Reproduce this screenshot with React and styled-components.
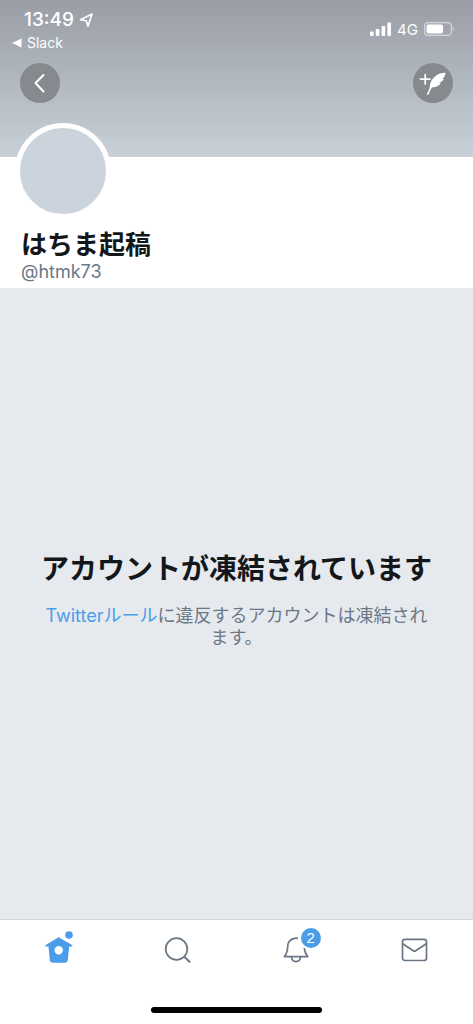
import React, { useState } from "react";
import styled, { createGlobalStyle } from "styled-components";

const GlobalStyle = createGlobalStyle`
  *,
  *::before,
  *::after {
    box-sizing: border-box;
  }

  body {
    margin: 0;
    background: #fff;
    color: #14171a;
    font-family: Inter, "Noto Sans CJK JP", sans-serif;
  }

  h1,
  h2,
  p {
    margin: 0;
  }
`;

const Page = styled.div`
  display: flex;
  flex-direction: column;
  min-height: 100vh;
`;

const Cover = styled.header`
  height: 157px;
  background: linear-gradient(#999da5, #b1b7bf 50%, #c8d1d8);
  color: #fff;
`;

const StatusBar = styled.div`
  display: flex;
  justify-content: space-between;
  height: 60px;
  padding: 8px 18px 0 12px;
`;

const StatusLeft = styled.div`
  display: flex;
  flex-direction: column;
`;

const Clock = styled.div`
  display: flex;
  align-items: center;
  gap: 4px;
  padding-left: 12px;
  font-size: 19px;
  font-weight: 500;
  line-height: 24px;
`;

const BackToApp = styled.a`
  display: flex;
  align-items: center;
  gap: 5px;
  color: inherit;
  font-size: 14px;
  line-height: 22px;
  text-decoration: none;
`;

const StatusRight = styled.div`
  display: flex;
  align-items: center;
  gap: 6px;
  height: 42px;
  font-size: 15px;
`;

const Actions = styled.div`
  display: flex;
  justify-content: space-between;
  padding: 3px 20px 0;
`;

const RoundButton = styled.button`
  display: flex;
  align-items: center;
  justify-content: center;
  width: 40px;
  height: 40px;
  padding: 0;
  border: 0;
  border-radius: 50%;
  background: #868a8e;
  color: #fff;
  cursor: pointer;
`;

const Profile = styled.section`
  height: 131px;
  padding: 0 21px;
  background: #fff;
`;

const Avatar = styled.div`
  width: 96px;
  height: 96px;
  margin: -34px 0 0 -6px;
  border: 5px solid #fff;
  border-radius: 50%;
  background: #cbd4dc;
`;

const Name = styled.h1`
  margin-top: 10px;
  font-size: 26px;
  font-weight: 700;
  line-height: 32px;
`;

const Handle = styled.p`
  color: #6b7785;
  font-size: 18px;
  line-height: 22px;
`;

const Suspended = styled.main`
  display: flex;
  flex: 1;
  flex-direction: column;
  align-items: center;
  justify-content: center;
  gap: 16px;
  padding: 0 40px 10px;
  background: #e6eaef;
  text-align: center;
`;

const Title = styled.h2`
  font-size: 28px;
  font-weight: 700;
  line-height: 40px;
`;

const Message = styled.p`
  color: #6b7785;
  font-size: 18px;
  line-height: 22px;
`;

const RuleLink = styled.a`
  color: #4a9de8;
  text-decoration: none;
`;

const TabBar = styled.nav`
  display: grid;
  grid-template-columns: repeat(4, 1fr);
  height: 84px;
  padding-top: 10px;
  border-top: 1px solid #d3d8dd;
  background: #fff;
`;

const Tab = styled.button`
  position: relative;
  display: flex;
  justify-content: center;
  height: 44px;
  padding: 0;
  border: 0;
  background: none;
  color: ${props => (props.$active ? "#4a9de8" : "#6b7785")};
  cursor: pointer;
`;

const Badge = styled.span`
  position: absolute;
  top: -4px;
  left: calc(50% + 3px);
  width: 24px;
  height: 24px;
  border: 2px solid #fff;
  border-radius: 50%;
  background: #4a9de8;
  color: #fff;
  font-size: 15px;
  line-height: 20px;
  text-align: center;
`;

const HomeArea = styled.footer`
  display: flex;
  justify-content: center;
  height: 21px;
  padding-top: 4px;
  background: #fff;
`;

const HomeIndicator = styled.div`
  width: 36%;
  height: 6px;
  border-radius: 3px;
  background: #000;
`;

const LocationIcon = () => (
  <svg width="16" height="16" viewBox="0 0 16 16" fill="none" aria-hidden="true">
    <path
      d="M14 2 2.500 7.800l5.800 1L10 14.200z"
      stroke="currentColor"
      strokeWidth="1.600"
      strokeLinejoin="round"
    />
  </svg>
);

const TriangleIcon = () => (
  <svg width="10" height="10" viewBox="0 0 10 10" aria-hidden="true">
    <path d="M0 5 9.500.5v9z" fill="currentColor" />
  </svg>
);

const SignalIcon = () => (
  <svg width="21" height="14" viewBox="0 0 21 14" fill="currentColor" aria-hidden="true">
    <rect x="0" y="9.500" width="3.600" height="4.500" rx="1" />
    <rect x="5.800" y="7" width="3.600" height="7" rx="1" />
    <rect x="11.600" y="4" width="3.600" height="10" rx="1" />
    <rect x="17.400" y="0.500" width="3.600" height="13.500" rx="1" />
  </svg>
);

const BatteryIcon = () => (
  <svg width="31" height="14" viewBox="0 0 31 14" aria-hidden="true">
    <rect
      x="0.600"
      y="0.600"
      width="26.800"
      height="12.800"
      rx="3.500"
      fill="none"
      stroke="#fff"
      strokeOpacity="0.550"
      strokeWidth="1.200"
    />
    <rect x="2.500" y="2.500" width="16.500" height="9" rx="1.800" fill="#fff" />
    <path d="M29 4.800c1.300.6 1.300 3.800 0 4.400z" fill="#fff" fillOpacity="0.600" />
  </svg>
);

const ChevronIcon = () => (
  <svg width="40" height="40" viewBox="0 0 40 40" fill="none" aria-hidden="true">
    <path
      d="M23.500 12 15.500 20l8 8.500"
      stroke="currentColor"
      strokeWidth="2"
      strokeLinecap="round"
      strokeLinejoin="round"
    />
  </svg>
);

const ComposeIcon = () => (
  <svg width="40" height="40" viewBox="0 0 40 40" fill="none" aria-hidden="true">
    <path d="M12.200 11.500v9.400M7.500 16.200h9.400" stroke="currentColor" strokeWidth="1.700" strokeLinecap="round" />
    <path
      d="M32.500 9.800C28.500 9.600 24.500 11 21.500 14c-3 2.800-4.300 5.500-4.700 9.300-.3 2.900-1.400 5.200-2.900 7.500-.5.900.9 1.500 1.500.6 1.100-1.900 1.700-3.900 2.700-5.700.6-1 1.400-1.300 2.600-1.400 3.500-.3 6-2 7.300-4.800-.8.300-1.700.4-2.600.3 2.600-.6 4.600-1.900 5.600-4-.6.200-1.100.2-1.700.1 2-1.500 3.100-3.500 3.200-6.100z"
      fill="currentColor"
    />
  </svg>
);

const HomeIcon = () => (
  <svg width="40" height="40" viewBox="0 0 40 40" aria-hidden="true">
    <path
      fill="currentColor"
      fillRule="evenodd"
      d="M20.200 7.500c-.3-.2-.7-.2-1 0L6.700 14.900c-.9.600-.4 1.800.6 1.700l2.200-.2 1.300 13.700c.2 1.800 1.300 2.700 2.900 2.700h12.200c1.600 0 2.700-.9 2.900-2.700l1.400-13.700 2.200.2c1 .1 1.400-1.100.6-1.700zM19.700 16a4.200 4.200 0 1 0 0 8.400 4.200 4.200 0 0 0 0-8.400z"
    />
    <circle cx="30" cy="5" r="3.800" fill="currentColor" />
  </svg>
);

const SearchIcon = () => (
  <svg width="40" height="40" viewBox="0 0 40 40" fill="none" stroke="currentColor" strokeWidth="1.700" aria-hidden="true">
    <circle cx="19.500" cy="19" r="10.800" />
    <path d="m27.500 27 5 4.700" strokeWidth="2" strokeLinecap="round" />
  </svg>
);

const BellIcon = () => (
  <svg width="40" height="40" viewBox="0 0 40 40" fill="none" stroke="currentColor" strokeWidth="1.700" strokeLinejoin="round" aria-hidden="true">
    <path d="M22 8.400c-1-.3-2.400-.3-3.600-.1-4.200.8-6.600 4-6.700 8.200-.1 5.100-1 7.300-3.300 10.100h23.300c-2.200-2.700-3.200-5-3.300-9.100" />
    <path d="M15.500 26.800c.2 3.100 2 4.900 4.500 4.900s4.300-1.800 4.500-4.900" />
  </svg>
);

const MailIcon = () => (
  <svg width="40" height="40" viewBox="0 0 40 40" fill="none" stroke="currentColor" strokeWidth="1.700" strokeLinejoin="round" aria-hidden="true">
    <rect x="8.500" y="9.300" width="24" height="21.200" rx="2.500" />
    <path d="m8.700 13.700 10.700 7c.7.500 1.500.5 2.200 0l10.700-7" />
  </svg>
);

const tabs = [
  { id: "home", label: "ホーム", Icon: HomeIcon },
  { id: "search", label: "検索", Icon: SearchIcon },
  { id: "notifications", label: "通知", Icon: BellIcon, count: 2 },
  { id: "messages", label: "メッセージ", Icon: MailIcon },
];

const App = () => {
  const [activeTab, setActiveTab] = useState("home");

  return (
    <>
      <GlobalStyle />
      <Page>
        <Cover>
          <StatusBar>
            <StatusLeft>
              <Clock>
                13:49
                <LocationIcon />
              </Clock>
              <BackToApp href="#slack">
                <TriangleIcon />
                Slack
              </BackToApp>
            </StatusLeft>
            <StatusRight>
              <SignalIcon />
              4G
              <BatteryIcon />
            </StatusRight>
          </StatusBar>
          <Actions>
            <RoundButton type="button" aria-label="戻る">
              <ChevronIcon />
            </RoundButton>
            <RoundButton type="button" aria-label="ツイートする">
              <ComposeIcon />
            </RoundButton>
          </Actions>
        </Cover>

        <Profile>
          <Avatar />
          <Name>はちま起稿</Name>
          <Handle>@htmk73</Handle>
        </Profile>

        <Suspended>
          <Title>アカウントが凍結されています</Title>
          <Message>
            <RuleLink href="#rules">Twitterルール</RuleLink>
            に違反するアカウントは凍結されます。
          </Message>
        </Suspended>

        <TabBar>
          {tabs.map(({ id, label, Icon, count }) => (
            <Tab
              key={id}
              type="button"
              aria-label={label}
              $active={activeTab === id}
              onClick={() => setActiveTab(id)}
            >
              <Icon />
              {count && <Badge>{count}</Badge>}
            </Tab>
          ))}
        </TabBar>
        <HomeArea>
          <HomeIndicator />
        </HomeArea>
      </Page>
    </>
  );
};

export default App;
